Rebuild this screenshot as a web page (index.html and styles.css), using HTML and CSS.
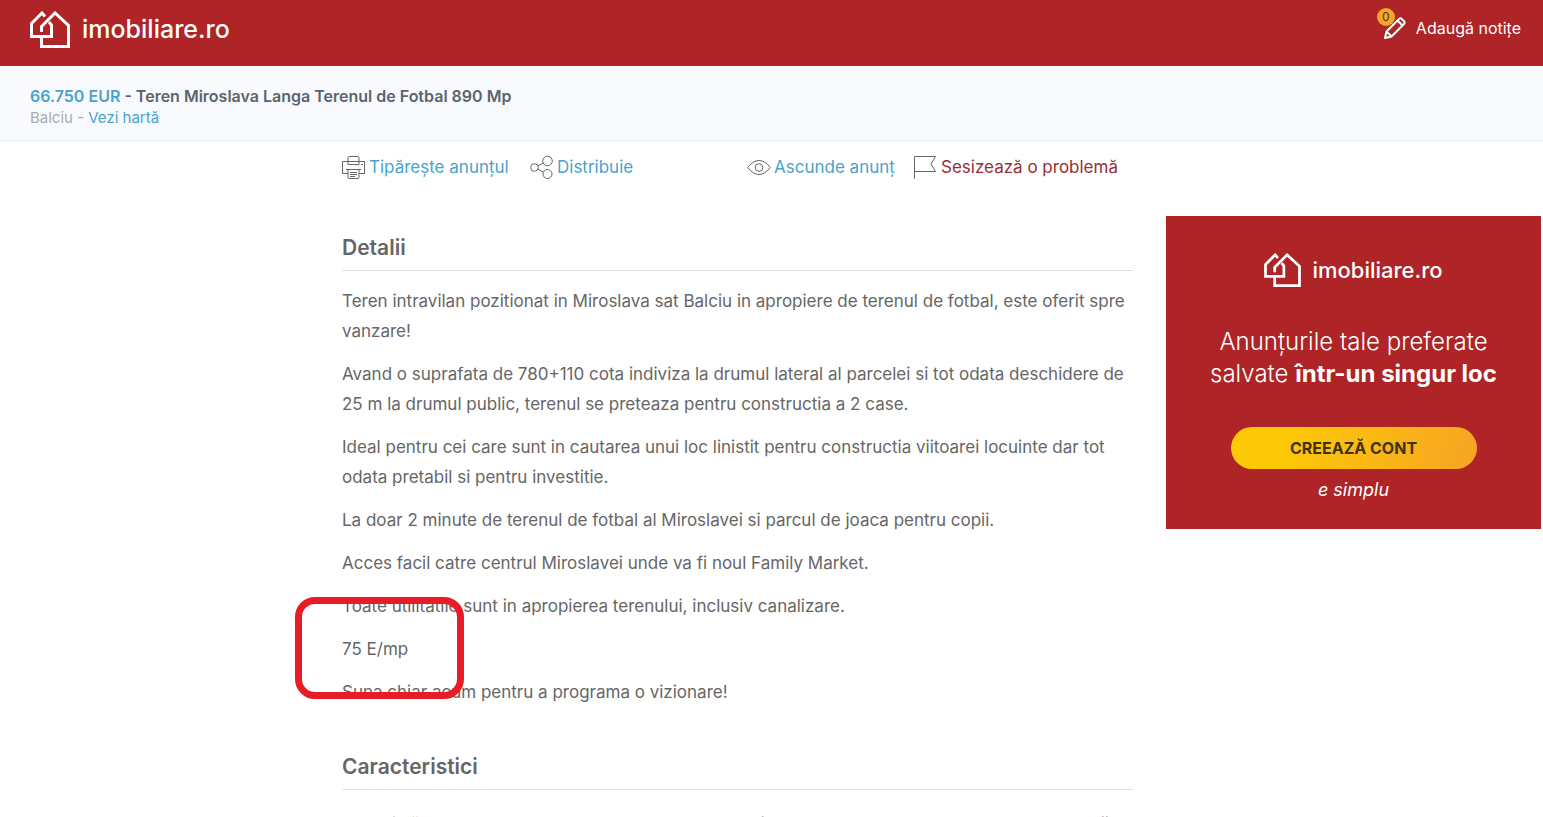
FILE: index.html
```
<!DOCTYPE html>
<html lang="ro">
<head>
  <meta charset="utf-8" />
  <meta name="viewport" content="width=device-width, initial-scale=1.0" />
  <title>Teren Miroslava Langa Terenul de Fotbal 890 Mp</title>
  <link rel="stylesheet" href="styles.css">
</head>
<body>

  <!-- logo, used in the header and in the banner -->
  <svg class="symbols" aria-hidden="true">
    <symbol id="houses" viewBox="0 0 40 37">
      <path d="M15 5.500 12 2 1.500 12.500V25.500H21.500V14L19 11" />
      <path d="M11.500 21V15.500L25 2 38.500 14.500V35.500H11.500V26" />
    </symbol>
  </svg>

  <header class="topbar">
    <a class="logo" href="#">
      <svg class="logo-icon"><use href="#houses" /></svg>
      <span>imobiliare.ro</span>
    </a>
    <a class="notes" href="#">
      <span class="notes-icon">
        <svg width="22" height="22" viewBox="0 0 22 22">
          <path d="M1 21 2.500 14.500 15 2Q16.500 .8 17.500 1.800L20.200 4.500Q21.200 5.500 20 7L7.500 19.500ZM2.500 14.500 7.500 19.500M13.500 3.500 18.500 8.500" />
        </svg>
        <span class="badge">0</span>
      </span>
      <span>Adaugă notițe</span>
    </a>
  </header>

  <div class="summary">
    <h1><span class="price">66.750 EUR</span> - Teren Miroslava Langa Terenul de Fotbal 890 Mp</h1>
    <p>Balciu - <a href="#">Vezi hartă</a></p>
  </div>

  <main class="page">
    <div class="content">
      <nav class="actions">
        <a href="#">
          <svg width="24" height="24" viewBox="0 0 24 24">
            <path d="M6 6V2.500Q6 1.500 7 1.500H16Q17 1.500 17 2.500V6.500M6 18.500H.5V6.500H22.500V18.500H17M6 6.500V9.500H17V6.500M6 14.500H17V22.500Q17 23.500 16 23.500H7Q6 23.500 6 22.500ZM8 17.500H15M8 19.500H15M8 21.500H13M4 14.500H19M19 9.500H21" />
          </svg>
          Tipărește anunțul
        </a>
        <a href="#">
          <svg width="24" height="24" viewBox="0 0 24 24">
            <circle cx="4.500" cy="12.500" r="3.800" /><circle cx="17.500" cy="6" r="4.800" /><circle cx="17.500" cy="19" r="4.500" />
            <path d="M8 11 13 8M8 14 13 17" />
          </svg>
          Distribuie
        </a>
        <a href="#">
          <svg width="24" height="24" viewBox="0 0 24 24">
            <path d="M.8 12.500Q6 5.500 12 5.500T23.200 12.500Q18 19.500 12 19.500T.8 12.500Z" /><circle cx="12" cy="12.500" r="3.800" />
          </svg>
          Ascunde anunț
        </a>
        <a class="report" href="#">
          <svg width="24" height="24" viewBox="0 0 24 24">
            <path d="M.5 24V1.500H21.500L17 9 21.500 16.500H.5" />
          </svg>
          Sesizează o problemă
        </a>
      </nav>

      <section class="details">
        <h2>Detalii</h2>
        <p>Teren intravilan pozitionat in Miroslava sat Balciu in apropiere de terenul de fotbal, este oferit spre vanzare!</p>
        <p>Avand o suprafata de 780+110 cota indiviza la drumul lateral al parcelei si tot odata deschidere de 25 m la drumul public, terenul se preteaza pentru constructia a 2 case.</p>
        <p>Ideal pentru cei care sunt in cautarea unui loc linistit pentru constructia viitoarei locuinte dar tot odata pretabil si pentru investitie.</p>
        <p>La doar 2 minute de terenul de fotbal al Miroslavei si parcul de joaca pentru copii.</p>
        <p>Acces facil catre centrul Miroslavei unde va fi noul Family Market.</p>
        <p>Toate utilitatile sunt in apropierea terenului, inclusiv canalizare.</p>
        <p class="marked">75 E/mp</p>
        <p>Suna chiar acum pentru a programa o vizionare!</p>
      </section>

      <section class="features">
        <h2>Caracteristici</h2>
        <dl>
          <div><dt>Suprafață teren:</dt><dd>890 mp</dd></div>
          <div><dt>Tip teren:</dt><dd>construcții</dd></div>
        </dl>
      </section>
    </div>

    <aside class="banner">
      <div class="logo">
        <svg class="logo-icon"><use href="#houses" /></svg>
        <span>imobiliare.ro</span>
      </div>
      <p class="pitch">Anunțurile tale preferate<br>salvate <strong>într-un singur loc</strong></p>
      <button type="button">CREEAZĂ CONT</button>
      <em>e simplu</em>
    </aside>
  </main>

</body>
</html>
```
FILE: styles.css
```
* {
  box-sizing: border-box;
  margin: 0;
  padding: 0;
}
body {
  background: #fff;
  color: #666;
  font-family: Inter, "Open Sans", sans-serif;
  font-size: 16px;
  font-weight: 400;
}
a {
  color: #4aa3cc;
  text-decoration: none;
}
svg {
  fill: none;
  stroke: currentColor;
  flex: none;
}
.symbols {
  position: absolute;
  width: 0;
  height: 0;
}

/* header */
.topbar {
  display: flex;
  justify-content: space-between;
  height: 66px;
  padding: 10px 22px 0 30px;
  background: #ae2427;
}
.logo {
  display: flex;
  align-items: center;
  gap: 12px;
  height: 38px;
  color: #fff;
  font-size: 25px;
  font-weight: 500;
}
.logo-icon {
  width: 40px;
  height: 37px;
  stroke-width: 3px;
}
.notes {
  display: flex;
  align-items: center;
  gap: 10px;
  height: 36px;
  color: #fff;
  font-size: 16px;
}
.notes-icon {
  position: relative;
  height: 22px;
  stroke-width: 2px;
}
.badge {
  position: absolute;
  top: -9px;
  left: -7px;
  width: 18px;
  height: 18px;
  border-radius: 50%;
  background: #f5a52c;
  color: #4d3510;
  font-size: 12px;
  line-height: 18px;
  text-align: center;
}

/* price and title */
.summary {
  height: 75px;
  padding: 19px 30px 0;
  border-bottom: 1px solid #e6eaee;
  background: #f9fafd;
  color: #a5adb5;
  font-size: 15px;
  line-height: 22px;
}
.summary h1 {
  color: #5a646e;
  font-size: 16px;
  font-weight: 600;
}
.summary .price {
  color: #4aa3cc;
}

/* page columns */
.page {
  display: grid;
  grid-template-columns: minmax(0, 1fr) 375px;
  gap: 33px;
  align-items: start;
  padding: 14px 2px 0 342px;
}
.actions {
  display: grid;
  grid-template-columns: 188px 217px 167px 1fr;
  height: 24px;
}
.actions a {
  display: flex;
  align-items: center;
  gap: 3px;
  line-height: 24px;
  white-space: nowrap;
  font-size: 17px;
}
.actions svg {
  color: #666;
}
.actions .report {
  color: #963036;
}
h2 {
  padding-bottom: 10px;
  margin-bottom: 15px;
  border-bottom: 1px solid #e1e1e1;
  font-size: 21px;
  font-weight: 600;
  line-height: 24px;
}
.details {
  margin-top: 57px;
}
.details p {
  margin-bottom: 13px;
  font-size: 17px;
  line-height: 30px;
}
.marked {
  position: relative;
}
.marked::after {
  content: "";
  position: absolute;
  top: -37px;
  left: -47px;
  box-sizing: border-box;
  width: 169px;
  height: 102px;
  border: 7px solid #e81c26;
  border-radius: 20px;
}
.features {
  margin-top: 48px;
}
.features dl {
  display: grid;
  grid-template-columns: 1fr 1fr;
  gap: 48px;
  padding: 4px 24px 0 0;
  font-size: 17px;
  line-height: 30px;
}
.features dl div {
  display: flex;
  justify-content: space-between;
}

/* account banner */
.banner {
  display: flex;
  flex-direction: column;
  align-items: center;
  margin-top: 61px;
  padding: 35px 0 27px;
  background: #ae2427;
  color: #fff;
}
.banner .logo {
  gap: 11px;
  font-size: 22px;
}
.banner .logo-icon {
  width: 37px;
  height: 34px;
}
.pitch {
  margin-top: 37px;
  font-size: 24px;
  font-weight: 300;
  line-height: 32px;
  text-align: center;
}
.pitch strong {
  font-weight: 700;
}
.banner button {
  width: 246px;
  height: 42px;
  margin-top: 37px;
  border: 0;
  border-radius: 21px;
  background: linear-gradient(100deg, #fdc907 20%, #f6a423);
  color: #40330c;
  font: 700 16px Inter, "Open Sans", sans-serif;
}
.banner em {
  margin-top: 9px;
  font-size: 18px;
  line-height: 24px;
}
```
